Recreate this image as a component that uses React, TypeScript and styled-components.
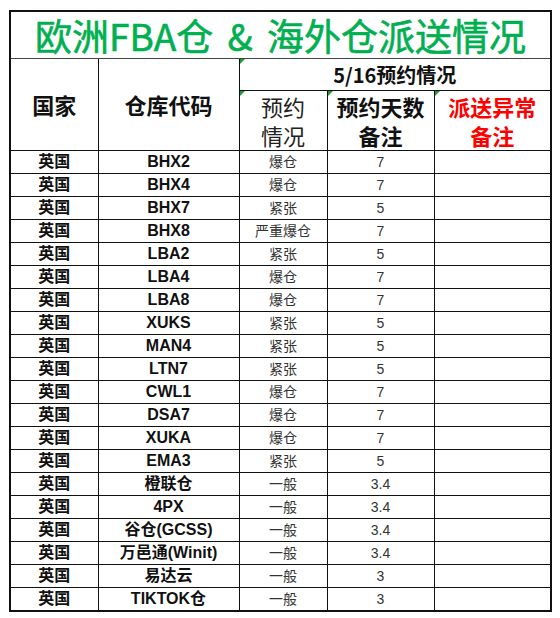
import React from "react";
import styled, { createGlobalStyle } from "styled-components";

interface Row {
  code: string;
  status: string;
  days: string;
}

const rows: Row[] = [
  { code: "BHX2", status: "爆仓", days: "7" },
  { code: "BHX4", status: "爆仓", days: "7" },
  { code: "BHX7", status: "紧张", days: "5" },
  { code: "BHX8", status: "严重爆仓", days: "7" },
  { code: "LBA2", status: "紧张", days: "5" },
  { code: "LBA4", status: "爆仓", days: "7" },
  { code: "LBA8", status: "爆仓", days: "7" },
  { code: "XUKS", status: "紧张", days: "5" },
  { code: "MAN4", status: "紧张", days: "5" },
  { code: "LTN7", status: "紧张", days: "5" },
  { code: "CWL1", status: "爆仓", days: "7" },
  { code: "DSA7", status: "爆仓", days: "7" },
  { code: "XUKA", status: "爆仓", days: "7" },
  { code: "EMA3", status: "紧张", days: "5" },
  { code: "橙联仓", status: "一般", days: "3.4" },
  { code: "4PX", status: "一般", days: "3.4" },
  { code: "谷仓(GCSS)", status: "一般", days: "3.4" },
  { code: "万邑通(Winit)", status: "一般", days: "3.4" },
  { code: "易达云", status: "一般", days: "3" },
  { code: "TIKTOK仓", status: "一般", days: "3" },
];

const GlobalStyle = createGlobalStyle`
  body {
    margin: 0;
    background: #fff;
    font-family: "Liberation Sans", "Noto Sans CJK SC", sans-serif;
  }
`;

const Page = styled.div`
  padding: 10px 0 0 9px;
`;

const Sheet = styled.table`
  border-collapse: collapse;
  table-layout: fixed;
  width: 541px;
  border: 2px solid #111;
`;

// title is medium weight in the sheet, a thin stroke fakes it
const TitleCell = styled.td`
  height: 46px;
  border: 1px solid #444;
  text-align: center;
  vertical-align: middle;
  padding: 0;
  font: 400 37px/46px "Noto Sans CJK SC", sans-serif;
  color: #00b050;
  -webkit-text-stroke: 0.6px #00b050;
  word-spacing: 6px;
  white-space: nowrap;
`;

const HeadCell = styled.td<{ $red?: boolean; $light?: boolean; $size?: number }>`
  position: relative;
  border: 1px solid #111;
  text-align: center;
  vertical-align: middle;
  padding: 0;
  font-family: "Noto Sans CJK SC", sans-serif;
  font-size: ${(p) => p.$size ?? 22}px;
  font-weight: ${(p) => (p.$light ? 400 : 700)};
  line-height: 29px;
  color: ${(p) => (p.$red ? "#ff0000" : p.$light ? "#222" : "#111")};
`;

const Flag = styled.span`
  position: absolute;
  left: 0;
  top: 0;
  width: 0;
  height: 0;
  border-top: 5px solid #1f9a3a;
  border-right: 5px solid transparent;
`;

const BodyRow = styled.tr`
  height: 23px;
`;

const Cell = styled.td<{ $bold?: boolean; $size?: number }>`
  border: 1px solid #111;
  padding: 0;
  text-align: center;
  vertical-align: middle;
  white-space: nowrap;
  font-family: "Liberation Sans", "Noto Sans CJK SC", sans-serif;
  font-size: ${(p) => p.$size ?? 14}px;
  font-weight: ${(p) => (p.$bold ? 700 : 400)};
  color: ${(p) => (p.$bold ? "#111" : "#333")};
  line-height: 20px;
`;

export default function App() {
  return (
    <Page>
      <GlobalStyle />
      <Sheet>
        <colgroup>
          <col style={{ width: 88 }} />
          <col style={{ width: 141 }} />
          <col style={{ width: 88 }} />
          <col style={{ width: 107 }} />
          <col style={{ width: 117 }} />
        </colgroup>
        <tbody>
          <tr>
            <TitleCell colSpan={5}>欧洲FBA仓 &amp; 海外仓派送情况</TitleCell>
          </tr>
          <tr style={{ height: 32 }}>
            <HeadCell rowSpan={2}>国家</HeadCell>
            <HeadCell rowSpan={2}>仓库代码</HeadCell>
            <HeadCell colSpan={3} $size={20}>
              <Flag />
              5/16预约情况
            </HeadCell>
          </tr>
          <tr style={{ height: 60 }}>
            <HeadCell $light>
              <Flag />
              预约
              <br />
              情况
            </HeadCell>
            <HeadCell>
              <Flag />
              预约天数
              <br />
              备注
            </HeadCell>
            <HeadCell $red>
              <Flag />
              派送异常
              <br />
              备注
            </HeadCell>
          </tr>
          {rows.map((r) => (
            <BodyRow key={r.code}>
              <Cell $bold $size={16}>英国</Cell>
              <Cell $bold $size={16}>{r.code}</Cell>
              <Cell>{r.status}</Cell>
              <Cell>{r.days}</Cell>
              <Cell />
            </BodyRow>
          ))}
        </tbody>
      </Sheet>
    </Page>
  );
}
